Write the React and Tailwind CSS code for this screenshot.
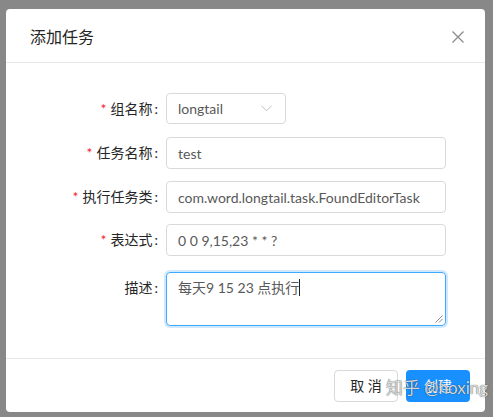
import React from 'react'

const font = { fontFamily: 'Lato, "Noto Sans CJK SC", sans-serif' }

function Label({ children, required }) {
  return (
    <div className="w-[152px] shrink-0 text-right text-[14px] text-[#262626] mr-[8px] leading-none">
      {required && <span className="text-[#f5222d] mr-[4px]">*</span>}
      {children}
      <span className="ml-[2px]">:</span>
    </div>
  )
}

function Row({ label, required, children, className = '' }) {
  return (
    <div className={`flex items-center ${className}`}>
      <Label required={required}>{label}</Label>
      {children}
    </div>
  )
}

function TextBox({ value, width = 'w-[280px]' }) {
  return (
    <div className={`${width} h-[32px] border border-[#d9d9d9] rounded-[4px] px-[11px] flex items-center text-[14px] text-[#595959]`}>
      {value}
    </div>
  )
}

function ChevronDown() {
  return (
    <svg width="11" height="7" viewBox="0 0 11 7" fill="none">
      <path d="M0.5 0.8 L5.5 5.8 L10.5 0.8" stroke="#bfbfbf" strokeWidth="1" />
    </svg>
  )
}

export default function App() {
  return (
    <div className="w-[493px] h-[417px] bg-[#888888] pt-[9px] pl-[6px] overflow-hidden" style={font}>
      <div className="w-[479px] h-[403px] bg-white rounded-[4px] flex flex-col relative">
        <div className="h-[54px] shrink-0 border-b border-[#e8e8e8] pl-[24px] pr-[21px] pt-[2px] flex items-center justify-between">
          <span className="text-[16px] text-[#262626]">添加任务</span>
          <svg width="12" height="12" viewBox="0 0 12 12">
            <path d="M0.5 0.5 L11.5 11.5 M11.5 0.5 L0.5 11.5" stroke="#8c8c8c" strokeWidth="1.3" />
          </svg>
        </div>

        <div className="flex-1 pt-[30px]">
          <Row label="组名称" required>
            <div className="w-[120px] h-[31px] border border-[#d9d9d9] rounded-[4px] pl-[11px] pr-[13px] flex items-center justify-between text-[14px] text-[#595959]">
              <span>longtail</span>
              <ChevronDown />
            </div>
          </Row>
          <Row label="任务名称" required className="mt-[13px]">
            <TextBox value="test" />
          </Row>
          <Row label="执行任务类" required className="mt-[12px]">
            <TextBox value="com.word.longtail.task.FoundEditorTask" />
          </Row>
          <Row label="表达式" required className="mt-[11px]">
            <TextBox value="0 0 9,15,23 * * ?" />
          </Row>
          <div className="flex items-start mt-[16px]">
            <div className="pt-[9px]">
              <Label>描述</Label>
            </div>
            <div className="relative w-[280px] h-[54px] border border-[#40a9ff] rounded-[4px] px-[11px] pt-[4px] text-[14px] text-[#595959] shadow-[0_0_0_2px_rgba(24,144,255,0.2)]">
              <span>每天9 15 23 点执行</span>
              <span className="inline-block w-px h-[17px] bg-[#222] align-[-3px]" />
              <svg className="absolute right-[2px] bottom-[2px]" width="8" height="8" viewBox="0 0 8 8">
                <path d="M7.5 0.5 L0.5 7.5 M7.5 4 L4 7.5" stroke="#8c8c8c" strokeWidth="1" />
              </svg>
            </div>
          </div>
        </div>

        <div className="h-[54px] shrink-0 border-t border-[#e8e8e8] pr-[15px] flex items-center justify-end gap-[8px]">
          <button className="w-[64px] h-[32px] border border-[#d9d9d9] rounded-[4px] bg-white text-[14px] text-[#262626]">取 消</button>
          <button className="w-[64px] h-[32px] rounded-[4px] bg-[#1890ff] text-[14px] text-white">创建</button>
        </div>

        <div className="absolute left-[380px] top-[366px] text-[17px] text-[#f0f0f0]/90 [text-shadow:0_0_1px_rgba(0,0,0,0.9)] pointer-events-none whitespace-nowrap">
          知乎 @hoxing
        </div>
      </div>
    </div>
  )
}
